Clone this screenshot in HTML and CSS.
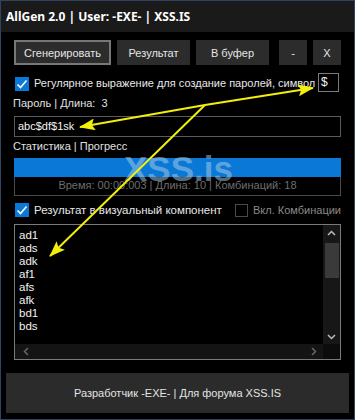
FILE: index.html
```html
<!DOCTYPE html>
<html lang="ru">
<head>
    <meta charset="UTF-8">
    <meta name="viewport" content="width=device-width, initial-scale=1.0">
    <title>AllGen 2.0</title>
    <link rel="stylesheet" href="styles.css">
</head>
<body>
<div class="window">
    <div class="titlebar">AllGen 2.0 | User: -EXE- | XSS.IS</div>

    <div class="content">
        <div class="toolbar">
            <button class="btn btn-generate" type="button">Сгенерировать</button>
            <button class="btn btn-result" type="button">Результат</button>
            <button class="btn btn-copy" type="button">В буфер</button>
            <button class="btn btn-small btn-min" type="button">-</button>
            <button class="btn btn-small" type="button">X</button>
        </div>

        <div class="regex-row">
            <span class="check checked">
                <svg width="14" height="14" viewBox="0 0 14 14"><polyline points="2.5,7.5 5.5,10.5 11.5,3.5" fill="none" stroke="#fff" stroke-width="1.6"/></svg>
            </span>
            <span class="regex-label">Регулярное выражение для создание паролей, символ</span>
            <span class="symbol">$</span>
        </div>

        <div class="caption">Пароль | Длина:&nbsp; 3</div>
        <div class="field">abc$df$1sk</div>

        <div class="caption caption-stats">Статистика | Прогресс</div>
        <div class="progress"></div>
        <div class="stats">Время: 00:00:003 | Длина: 10 | Комбинаций: 18</div>

        <div class="options">
            <span class="check checked">
                <svg width="14" height="14" viewBox="0 0 14 14"><polyline points="2.5,7.5 5.5,10.5 11.5,3.5" fill="none" stroke="#fff" stroke-width="1.6"/></svg>
            </span>
            <span class="opt-label">Результат в визуальный компонент</span>
            <span class="check check-off"></span>
            <span class="opt-label opt-off">Вкл. Комбинации</span>
        </div>

        <div class="list">
            <div class="items">
                <div>ad1</div>
                <div>ads</div>
                <div>adk</div>
                <div>af1</div>
                <div>afs</div>
                <div>afk</div>
                <div>bd1</div>
                <div>bds</div>
            </div>
            <div class="vscroll">
                <svg class="sb-arrow" width="9" height="6" viewBox="0 0 9 6"><polyline points="1,5 4.5,1.5 8,5" fill="none" stroke="#bbb" stroke-width="1.5"/></svg>
                <div class="thumb"></div>
                <div class="sb-fill"></div>
                <svg class="sb-arrow" width="9" height="6" viewBox="0 0 9 6"><polyline points="1,1 4.5,4.5 8,1" fill="none" stroke="#bbb" stroke-width="1.5"/></svg>
            </div>
            <div class="hscroll">
                <svg width="6" height="9" viewBox="0 0 6 9"><polyline points="5,1 1.5,4.5 5,8" fill="none" stroke="#666" stroke-width="1.5"/></svg>
                <svg width="6" height="9" viewBox="0 0 6 9"><polyline points="1,1 4.5,4.5 1,8" fill="none" stroke="#666" stroke-width="1.5"/></svg>
            </div>
            <div class="corner"></div>
        </div>
    </div>

    <div class="footer">Разработчик -EXE- | Для форума XSS.IS</div>

    <div class="watermark">XSS.is</div>
    <svg class="arrows" width="355" height="420" viewBox="0 0 355 420">
        <defs>
            <marker id="head" viewBox="0 0 16 12" refX="15" refY="6" markerWidth="16" markerHeight="12" orient="auto" markerUnits="userSpaceOnUse">
                <path d="M0,0 L16,6 L0,12 L3,6 z" fill="#f2ef0c"/>
            </marker>
        </defs>
        <line x1="205" y1="105" x2="313" y2="88" stroke="#f2ef0c" stroke-width="2" marker-end="url(#head)"/>
        <line x1="205" y1="105" x2="80" y2="127" stroke="#f2ef0c" stroke-width="2" marker-end="url(#head)"/>
        <line x1="205" y1="105" x2="50" y2="256" stroke="#f2ef0c" stroke-width="2" marker-end="url(#head)"/>
    </svg>
</div>
</body>
</html>
```

FILE: styles.css
```css
body {
    margin: 0;
    padding: 0;
    background: #000;
    font-family: "Liberation Sans", Arial, sans-serif;
    font-size: 11px;
    color: #e8e8e8;
}

.window {
    position: relative;
    width: 355px;
    height: 420px;
    box-sizing: border-box;
    border: 1px solid #2f4360;
    background: #000;
    overflow: hidden;
}

.titlebar {
    height: 31px;
    line-height: 31px;
    padding-left: 5px;
    background: #1a1a1a;
    color: #fff;
    font-family: "Noto Sans", sans-serif;
    font-weight: bold;
    font-size: 12px;
}

.content {
    padding: 0 13px;
}

/* buttons */
.toolbar {
    display: flex;
    margin-top: 8px;
    height: 25px;
}

.btn {
    height: 25px;
    border: 0;
    padding: 0;
    margin: 0 6px 0 0;
    background: #2c2c2c;
    color: #e6e6e6;
    font-family: inherit;
    font-size: 11px;
}

.btn-generate {
    width: 97px;
    border: 2px solid #777;
}
.btn-result { width: 73px; }
.btn-copy { width: 73px; margin-right: 10px; }
.btn-small { width: 28px; }
.btn-small:last-child { margin-right: 0; }

/* regex row */
.regex-row {
    display: flex;
    align-items: center;
    margin-top: 8px;
    height: 19px;
}

.check {
    display: inline-block;
    width: 14px;
    height: 14px;
    box-sizing: border-box;
    flex: none;
}
.checked {
    background: #0a78d7;
}
.checked svg { display: block; }

.check-off {
    width: 13px;
    height: 13px;
    border: 1px solid #4a4a4a;
    margin-left: auto;
}

.regex-row .check { margin: 2px 0 0 1px; }

.regex-label {
    margin-left: 5px;
    white-space: nowrap;
}

.symbol {
    margin-left: auto;
    margin-right: 2px;
    width: 21px;
    height: 19px;
    box-sizing: border-box;
    border: 1px solid #7a7a7a;
    padding-left: 2px;
    line-height: 17px;
    font-size: 12px;
    color: #f2f2f2;
}

.caption {
    margin-top: 4px;
    height: 15px;
    line-height: 15px;
    margin-left: -1px;
    color: #e0e0e0;
}
.caption-stats { margin-top: 2px; }

.field {
    margin-top: 5px;
    height: 21px;
    box-sizing: border-box;
    border: 1px solid #5a5a5a;
    padding-left: 3px;
    line-height: 19px;
    color: #f4f4f4;
}

.progress {
    margin-top: 4px;
    height: 19px;
    background: #0a78d7;
}

.stats {
    height: 19px;
    box-sizing: border-box;
    border: 1px solid #4a4a4a;
    border-top: 0;
    text-align: center;
    line-height: 17px;
    color: #6e6e6e;
}

.options {
    display: flex;
    align-items: center;
    margin-top: 6px;
    height: 16px;
}
.options .checked { margin-left: 1px; }

.opt-label {
    margin-left: 5px;
    white-space: nowrap;
    font-size: 11.5px;
}
.opt-off {
    font-size: 11px;
    color: #8a8a8a;
}

/* result list */
.list {
    margin-top: 6px;
    height: 136px;
    box-sizing: border-box;
    border: 1px solid #7a7a7a;
    display: grid;
    grid-template-columns: 1fr 17px;
    grid-template-rows: 1fr 15px;
}

.items {
    padding: 4px 0 0 4px;
    line-height: 13px;
    font-size: 11.5px;
    color: #f2f2f2;
    overflow: hidden;
}
.items div {
    height: 13px;
}

.vscroll {
    display: flex;
    flex-direction: column;
    align-items: center;
    background: #171717;
    padding: 5px 0 4px;
}
.vscroll .thumb {
    width: 14px;
    height: 35px;
    margin-top: 7px;
    background: #3a3a3a;
}
.sb-fill { flex: 1; }

.hscroll {
    display: flex;
    justify-content: space-between;
    align-items: center;
    background: #141414;
    padding: 0 6px 0 8px;
}

.corner {
    background: #0c0c0c;
}

.footer {
    margin: 13px 5px 0;
    height: 40px;
    line-height: 40px;
    background: #2b2b2b;
    text-align: center;
    color: #e4e4e4;
}

/* overlays: forum watermark and annotation arrows */
.watermark {
    position: absolute;
    left: 123px;
    top: 150px;
    line-height: 35px;
    font-family: "Liberation Sans", Arial, sans-serif;
    font-weight: bold;
    font-size: 35px;
    color: rgba(165, 200, 228, 0.55);
}

.arrows {
    position: absolute;
    left: -1px;
    top: -1px;
}
```
